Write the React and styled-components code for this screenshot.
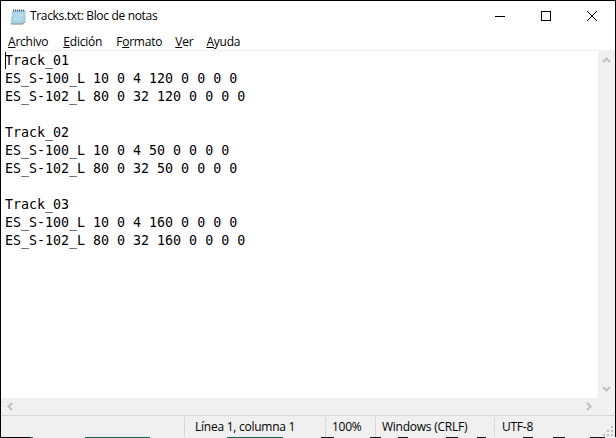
import React from "react";
import styled, { createGlobalStyle } from "styled-components";

const Global = createGlobalStyle`
  html, body { margin: 0; padding: 0; background: #fff; }
  #root { width: 616px; height: 438px; overflow: hidden; }
`;

const Window = styled.div`
  width: 616px; height: 438px; box-sizing: border-box;
  display: flex; flex-direction: column;
  background: #fff; position: relative;
  border-top: 1px solid #000; border-left: 1px solid #000; border-right: 1px solid #000;
  font-family: "Open Sans", "Noto Sans", sans-serif; color: #000;
`;
const TitleBar = styled.div`
  height: 30px; display: flex; align-items: center; flex: none;
  padding-left: 9px;
`;
const AppIcon = styled.svg`width: 16px; height: 17px; flex: none; margin-right: 4px;`;
const Title = styled.div`font-size: 12px; flex: 1; letter-spacing: -0.33px; margin-top: -1px;`;
const WinButton = styled.div`
  width: 46px; height: 30px; display: flex; align-items: center; justify-content: center;
  svg { display: block; }
`;
const MenuBar = styled.div`
  flex: none; display: flex; align-items: center; padding: 1px 0 0 7px; gap: 14px;
  font-size: 12px; letter-spacing: -0.22px; border-bottom: 1px solid #f0f0f0; box-sizing: border-box;
  height: 20px;
`;
const MenuItem = styled.span`
  margin-left: ${p => p.$nudge || 0}px;
  u { text-underline-offset: 1px; }
`;
const Middle = styled.div`flex: 1; display: grid; grid-template-columns: 1fr 17px; grid-template-rows: 1fr 17px; min-height: 0;`;
const Editor = styled.pre`
  margin: 0; padding: 1px 0 0 4px; position: relative;
  font: 13.31px/18px "DejaVu Sans Mono", "Liberation Mono", monospace;
  overflow: hidden;
`;
const Caret = styled.i`
  position: absolute; left: 4px; top: 1px; width: 1px; height: 17px; background: #000;
`;
const VScroll = styled.div`
  background: #f0f0f0; display: flex; flex-direction: column; align-items: center; justify-content: space-between;
  padding: 5px 0; box-sizing: border-box;
`;
const HScroll = styled.div`
  background: #f0f0f0; display: flex; align-items: center; justify-content: space-between; padding: 0 5px;
`;
const Corner = styled.div`background: #f0f0f0;`;
const StatusBar = styled.div`
  height: 23px; flex: none; box-sizing: border-box; background: #f0f0f0; border-top: 1px solid #d7d7d7;
  display: flex; font-size: 12px; letter-spacing: -0.25px; position: relative; padding-bottom: 1px;
`;
const Spacer = styled.div`width: 183px; flex: none;`;
const Cell = styled.div`
  width: ${p => p.$w}px; flex: none; box-sizing: border-box; padding-left: ${p => p.$pad}px;
  border-left: 1px solid #d7d7d7; margin-top: 1px; line-height: 20px; white-space: nowrap;
`;
const Grip = styled.svg`position: absolute; right: 1px; bottom: 1px; width: 12px; height: 12px;`;
const EdgeRow = styled.div`
  position: absolute; left: -1px; right: -1px; bottom: 0; height: 1px; background: #f0f0f0;
`;
const Edge = styled.i`
  position: absolute; top: 0; height: 1px; background: ${p => p.$c};
`;

const edges = [
  [0, 30, "#000"], [30, 3, "#17614f"], [85, 65, "#17614f"], [227, 56, "#17614f"],
  [321, 13, "#111"], [370, 11, "#111"], [398, 10, "#111"], [446, 12, "#111"],
  [477, 9, "#111"], [523, 10, "#111"], [553, 12, "#111"], [590, 15, "#111"],
];

const text = `Track_01
ES_S-100_L 10 0 4 120 0 0 0 0
ES_S-102_L 80 0 32 120 0 0 0 0

Track_02
ES_S-100_L 10 0 4 50 0 0 0 0
ES_S-102_L 80 0 32 50 0 0 0 0

Track_03
ES_S-100_L 10 0 4 160 0 0 0 0
ES_S-102_L 80 0 32 160 0 0 0 0`;

const Chevron = ({ d }) => (
  <svg width="9" height="9" viewBox="0 0 9 9" style={{ display: "block" }}>
    <path d={d} fill="none" stroke="#c0c0c0" strokeWidth="2" />
  </svg>
);

export default function App() {
  return (
    <Window>
      <Global />
      <TitleBar>
        <AppIcon viewBox="0 0 16 17">
          <path d="M3 2.5h12v11.5l-2 2H1z" fill="#a3d3e8" stroke="#9dbcc8" strokeWidth="0.8" />
          <path d="M1.5 16h11.5l2-2" fill="none" stroke="#a89a78" strokeWidth="1" />
          <path d="M3.5 1.5v2M5.5 1.5v2M7.5 1.5v2M9.5 1.5v2M11.5 1.5v2M13.5 1.5v2" stroke="#56646c" strokeWidth="1" />
          <path d="M4.5 6h8M4 8h8.5M3.6 10h8.6M3.2 12h8.6" stroke="#c9e7f2" strokeWidth="0.8" />
        </AppIcon>
        <Title>Tracks.txt: Bloc de notas</Title>
        <WinButton>
          <svg width="10" height="10" viewBox="0 0 10 10"><path d="M0 5.5h10" stroke="#000" strokeWidth="1" /></svg>
        </WinButton>
        <WinButton>
          <svg width="10" height="10" viewBox="0 0 10 10"><rect x=".5" y=".5" width="9" height="9" fill="none" stroke="#000" /></svg>
        </WinButton>
        <WinButton>
          <svg width="10" height="10" viewBox="0 0 10 10"><path d="M0 0l10 10M10 0L0 10" stroke="#000" strokeWidth="1" /></svg>
        </WinButton>
      </TitleBar>
      <MenuBar>
        <MenuItem><u>A</u>rchivo</MenuItem>
        <MenuItem $nudge={1}><u>E</u>dición</MenuItem>
        <MenuItem>F<u>o</u>rmato</MenuItem>
        <MenuItem $nudge={-1}><u>V</u>er</MenuItem>
        <MenuItem $nudge={-1}><u>A</u>yuda</MenuItem>
      </MenuBar>
      <Middle>
        <Editor><Caret />{text}</Editor>
        <VScroll>
          <Chevron d="M1 6l3.5-3.5L8 6" />
          <Chevron d="M1 3l3.5 3.5L8 3" />
        </VScroll>
        <HScroll>
          <Chevron d="M6 1L2.5 4.5 6 8" />
          <Chevron d="M3 1l3.5 3.5L3 8" />
        </HScroll>
        <Corner />
      </Middle>
      <StatusBar>
        <Spacer />
        <Cell $w={141} $pad={10}>Línea 1, columna 1</Cell>
        <Cell $w={50} $pad={6}>100%</Cell>
        <Cell $w={119} $pad={6}>Windows (CRLF)</Cell>
        <Cell $w={120} $pad={7}>UTF-8</Cell>
        <Grip viewBox="0 0 12 12">
          <path d="M9 1h2v2H9zM5 5h2v2H5zM9 5h2v2H9zM1 9h2v2H1zM5 9h2v2H5zM9 9h2v2H9z" fill="#bdbdbd" />
        </Grip>
        <EdgeRow>
          {edges.map(([x, w, c]) => (
            <Edge key={x} $c={c} style={{ left: x, width: w }} />
          ))}
        </EdgeRow>
      </StatusBar>
    </Window>
  );
}
